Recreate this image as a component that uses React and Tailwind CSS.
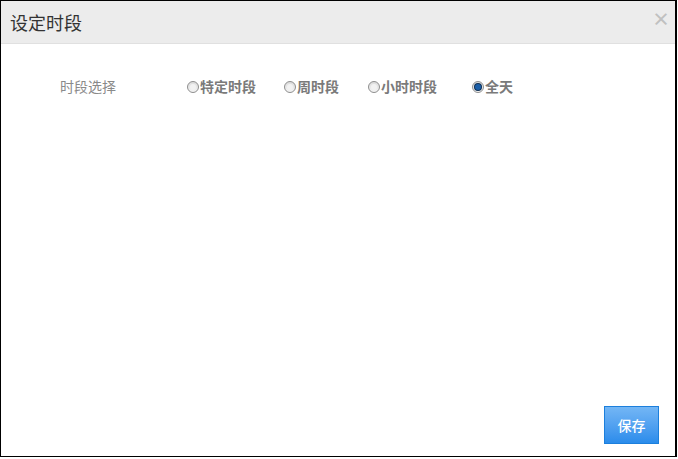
import { useState } from 'react';

const options = [
  { key: 'special', label: '特定时段', width: 'w-[97px]' },
  { key: 'week', label: '周时段', width: 'w-[84px]' },
  { key: 'hour', label: '小时时段', width: 'w-[104px]' },
  { key: 'all', label: '全天', width: 'w-[60px]' },
];

function Radio({ checked }) {
  return (
    <span className="flex h-[12px] w-[12px] shrink-0 items-center justify-center rounded-full border border-[#8e8e8e] bg-gradient-to-b from-[#dcdcdc] to-[#f4f4f4]">
      {checked ? (
        <span className="h-[6px] w-[6px] rounded-full bg-[#1b5fa8] shadow-[0_0_0_1px_#0d2f55]" />
      ) : (
        <span className="h-[6px] w-[6px] rounded-full bg-[#f2f2f2]" />
      )}
    </span>
  );
}

export default function App() {
  const [mode, setMode] = useState('all');

  return (
    <div
      className="flex h-[457px] w-[677px] flex-col border border-r-2 border-black bg-white"
      style={{ fontFamily: '"Noto Sans CJK SC", "Liberation Sans", sans-serif' }}
    >
      <div className="flex h-[43px] shrink-0 items-center justify-between border-b border-[#e0e0e0] bg-[#ececec] pl-[9px] pr-[5px]">
        <h1 className="text-[18px] leading-none text-[#333]">设定时段</h1>
        <button className="mb-[8px] text-[18px] font-bold leading-none text-[#c0c0c0]">×</button>
      </div>

      <div className="flex flex-1 flex-col">
        <div className="mt-[32px] flex items-center">
          <span className="ml-[59px] w-[127px] text-[14px] text-[#8a8a8a]">时段选择</span>
          <div className="flex items-center">
            {options.map(o => (
              <label
                key={o.key}
                onClick={() => setMode(o.key)}
                className={`flex cursor-pointer items-center gap-[1px] ${o.width}`}
              >
                <Radio checked={mode === o.key} />
                <span className="text-[14px] font-bold text-[#7a7a7a]">{o.label}</span>
              </label>
            ))}
          </div>
        </div>

        <div className="mt-auto mb-[12px] flex justify-end pr-[16px]">
          <button className="h-[38px] w-[55px] border border-[#1c7fdc] bg-gradient-to-b from-[#73b6f5] to-[#2a8ceb] text-[14px] font-medium text-white">
            保存
          </button>
        </div>
      </div>
    </div>
  );
}
